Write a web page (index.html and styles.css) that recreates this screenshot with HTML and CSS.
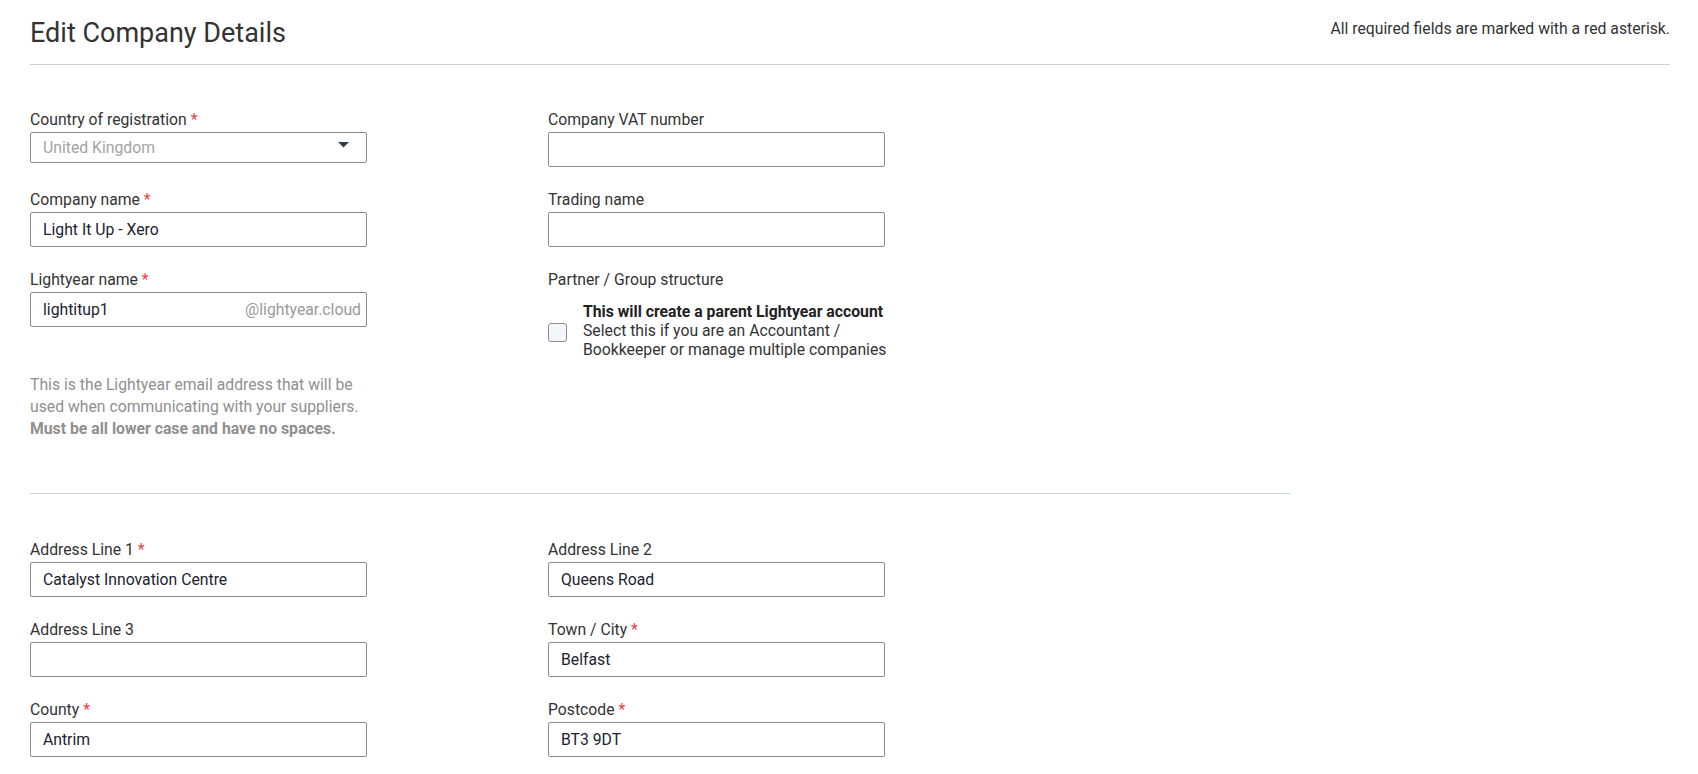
FILE: index.html
```html
<!DOCTYPE html>
<html lang="en">
<head>
<meta charset="utf-8">
<title>Edit Company Details</title>
<link rel="stylesheet" href="styles.css">
</head>
<body>
<div class="page">
  <header class="header">
    <h1 class="title">Edit Company Details</h1>
    <p class="note">All required fields are marked with a red asterisk.</p>
  </header>

  <section class="section section-company">
    <div class="grid">
      <div class="field">
        <label class="label">Country of registration <span class="req">*</span></label>
        <div class="select">
          <span class="select-value">United Kingdom</span>
          <svg class="caret" width="11" height="6" viewBox="0 0 11 6"><path d="M0 0 H11 L5.5 5.5 Z" fill="#2d3e4e"/></svg>
        </div>
      </div>
      <div class="field">
        <label class="label">Company VAT number</label>
        <input class="input" type="text" value="" tabindex="-1" autocomplete="off">
      </div>

      <div class="field">
        <label class="label">Company name <span class="req">*</span></label>
        <input class="input" type="text" value="Light It Up - Xero" tabindex="-1" autocomplete="off">
      </div>
      <div class="field">
        <label class="label">Trading name</label>
        <input class="input" type="text" value="" tabindex="-1" autocomplete="off">
      </div>

      <div class="field">
        <label class="label">Lightyear name <span class="req">*</span></label>
        <div class="input-group">
          <input class="input-bare" type="text" value="lightitup1" tabindex="-1" autocomplete="off">
          <span class="suffix">@lightyear.cloud</span>
        </div>
        <p class="help">This is the Lightyear email address that will be used when communicating with your suppliers.<br><strong>Must be all lower case and have no spaces.</strong></p>
      </div>
      <div class="field">
        <label class="label">Partner / Group structure</label>
        <div class="check-row">
          <span class="checkbox"></span>
          <div class="check-text">
            <strong class="check-title">This will create a parent Lightyear account</strong>
            <span>Select this if you are an Accountant /</span>
            <span>Bookkeeper or manage multiple companies</span>
          </div>
        </div>
      </div>
    </div>
  </section>

  <hr class="divider">

  <section class="section section-address">
    <div class="grid">
      <div class="field">
        <label class="label">Address Line 1 <span class="req">*</span></label>
        <input class="input" type="text" value="Catalyst Innovation Centre" tabindex="-1" autocomplete="off">
      </div>
      <div class="field">
        <label class="label">Address Line 2</label>
        <input class="input" type="text" value="Queens Road" tabindex="-1" autocomplete="off">
      </div>
      <div class="field">
        <label class="label">Address Line 3</label>
        <input class="input" type="text" value="" tabindex="-1" autocomplete="off">
      </div>
      <div class="field">
        <label class="label">Town / City <span class="req">*</span></label>
        <input class="input" type="text" value="Belfast" tabindex="-1" autocomplete="off">
      </div>
      <div class="field">
        <label class="label">County <span class="req">*</span></label>
        <input class="input" type="text" value="Antrim" tabindex="-1" autocomplete="off">
      </div>
      <div class="field">
        <label class="label">Postcode <span class="req">*</span></label>
        <input class="input" type="text" value="BT3 9DT" tabindex="-1" autocomplete="off">
      </div>
    </div>
  </section>
</div>
</body>
</html>
```

FILE: styles.css
```css
* {
  box-sizing: border-box;
}

html, body {
  margin: 0;
  padding: 0;
  background: #ffffff;
}

body {
  font-family: Roboto, "Liberation Sans", Arial, sans-serif;
  font-size: 15.75px;
  color: #333333;
  overflow: hidden;
}

.page {
  padding: 0 28px 0 30px;
}

.header {
  display: flex;
  justify-content: space-between;
  align-items: flex-start;
  height: 65px;
  padding-top: 16px;
  border-bottom: 1px solid #cbd3da;
}

.title {
  margin: 0;
  font-size: 27px;
  line-height: 34px;
  font-weight: 400;
  color: #333333;
}

.note {
  margin: 3px 0 0 0;
  font-size: 15.75px;
  line-height: 20px;
  color: #333333;
}

.section-company {
  padding-top: 45px;
}

.grid {
  display: grid;
  grid-template-columns: 337px 337px;
  column-gap: 181px;
  row-gap: 23px;
  align-items: start;
}

.field {
  display: flex;
  flex-direction: column;
}

.label {
  display: block;
  font-size: 15.75px;
  line-height: 20px;
  margin-bottom: 2px;
  color: #333333;
}

.req {
  color: #e8414b;
}

.input {
  display: block;
  width: 100%;
  height: 35px;
  margin: 0;
  padding: 0 12px;
  border: 1px solid #8c8c8c;
  border-radius: 2px;
  font-family: Roboto, "Liberation Sans", Arial, sans-serif;
  font-size: 15.75px;
  color: #222230;
  background: #ffffff;
  outline: none;
  caret-color: transparent;
}

.select {
  display: flex;
  align-items: center;
  justify-content: space-between;
  height: 31px;
  padding: 0 17px 0 12px;
  border: 1px solid #8c8c8c;
  border-radius: 2px;
  margin-bottom: 4px;
}

.select-value {
  color: #a3a3a3;
  font-size: 15.75px;
  line-height: 20px;
}

.caret {
  display: block;
  margin-top: -5px;
}

.input-group {
  display: flex;
  align-items: center;
  height: 35px;
  border: 1px solid #8c8c8c;
  border-radius: 2px;
  padding: 0 5px 0 12px;
}

.input-bare {
  flex: 1;
  min-width: 0;
  border: 0;
  padding: 0;
  margin: 0;
  font-family: Roboto, "Liberation Sans", Arial, sans-serif;
  font-size: 15.75px;
  color: #222230;
  outline: none;
  background: transparent;
  caret-color: transparent;
}

.suffix {
  color: #9a9a9a;
  font-size: 15.75px;
}

.help {
  margin: 47px 0 0 0;
  font-size: 15.75px;
  line-height: 22px;
  color: #8f8f8f;
}

.help strong {
  font-weight: 700;
}

.check-row {
  display: flex;
  align-items: center;
  margin-top: 10px;
}

.checkbox {
  flex: none;
  width: 19px;
  height: 19px;
  border: 1px solid #8c8c8c;
  border-radius: 3px;
  background: #f3f7fb;
  margin-right: 16px;
  margin-top: 3px;
}

.check-text {
  flex: none;
  display: flex;
  flex-direction: column;
  font-size: 15.75px;
  line-height: 19px;
  color: #333333;
  white-space: nowrap;
}

.check-title {
  font-weight: 700;
  color: #222222;
}

.divider {
  width: 1260px;
  height: 1px;
  margin: 53px 0 0 0;
  border: 0;
  background: #cbd3da;
}

.section-address {
  padding-top: 46px;
}
```
